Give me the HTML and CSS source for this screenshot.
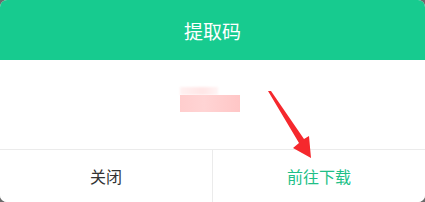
FILE: index.html
```html
<!DOCTYPE html>
<html lang="zh">
<head>
    <meta charset="UTF-8">
    <meta name="viewport" content="width=device-width, initial-scale=1.0">
    <title>提取码</title>
    <link rel="stylesheet" href="styles.css">
</head>
<body>
    <div class="dialog">
        <div class="dialog-header">提取码</div>
        <div class="dialog-body">
            <div class="code-blur">
                <div class="blur-top"></div>
                <div class="blur-bottom"></div>
            </div>
            <svg class="arrow" width="60" height="80" viewBox="260 85 60 80">
                <polygon points="268,91 271,91 304,139 309,136 311,158 293,148 299,143" fill="#f5282d"/>
            </svg>
        </div>
        <div class="dialog-footer">
            <button class="btn-close">关闭</button>
            <button class="btn-go">前往下载</button>
        </div>
    </div>
</body>
</html>
```

FILE: styles.css
```css
body {
    margin: 0;
    background: #6b6b6b;
    font-family: "Noto Sans CJK SC", "Noto Sans", sans-serif;
}

.dialog {
    width: 425px;
    height: 202px;
    background: #fff;
    border-radius: 7px;
    overflow: hidden;
    position: relative;
}

.dialog-header {
    height: 60px;
    background: #17cb8f;
    color: #fff;
    font-size: 19px;
    line-height: 62px;
    text-align: center;
}

.dialog-body {
    height: 89px;
    display: flex;
    align-items: flex-start;
    justify-content: center;
}

.code-blur {
    margin-top: 27px;
    margin-left: -5px;
    width: 60px;
    height: 30px;
}

.blur-top {
    width: 38px;
    height: 8px;
    background: linear-gradient(90deg, #fff1f1, #ffe6e6 60%, #fff4f4);
    filter: blur(1px);
}

.blur-bottom {
    height: 17px;
    background: linear-gradient(90deg, #ffcdcd, #ffd4d4 40%, #ffc6c6);
    filter: blur(0.6px);
}

.arrow {
    position: absolute;
    left: 260px;
    top: 85px;
}

.dialog-footer {
    display: flex;
    border-top: 1px solid #ebebeb;
    height: 52px;
}

.dialog-footer button {
    flex: 1;
    border: none;
    background: #fff;
    font-family: inherit;
    font-size: 16px;
    padding: 0;
    cursor: pointer;
}

.btn-close {
    color: #333;
    border-right: 1px solid #ebebeb !important;
}

.btn-go {
    color: #21bf87;
}
```
